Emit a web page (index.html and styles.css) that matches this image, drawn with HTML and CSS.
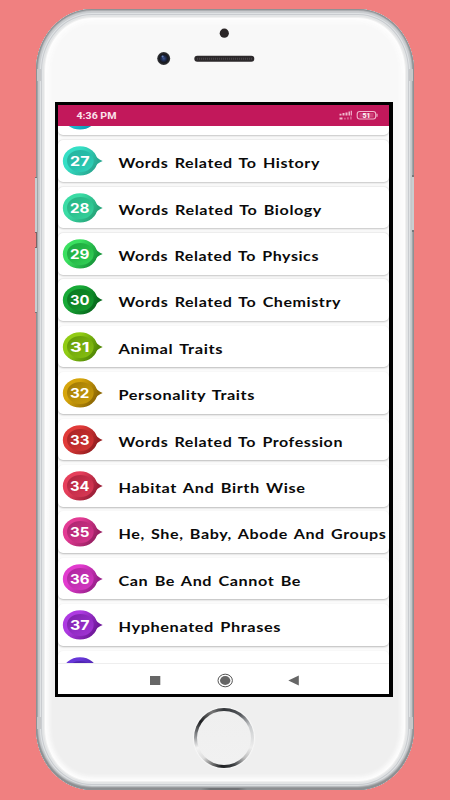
FILE: index.html
```html
<!DOCTYPE html>
<html>

<head>
    <meta charset="utf-8">
    <title>Vocabulary</title>
    <link rel="stylesheet" href="styles.css">
</head>

<body>
    <div class="phone">
        <span class="side left-up"></span>
        <span class="side left-gap"></span>
        <span class="side left-down"></span>
        <span class="side right-key"></span>
        <span class="antenna top-left"></span>
        <span class="antenna top-right"></span>
        <span class="antenna bottom-left"></span>
        <span class="antenna bottom-right"></span>
        <svg class="earpiece" viewBox="0 0 378 93">
            <defs>
                <radialGradient id="lens">
                    <stop offset="0" stop-color="#3c5490"/>
                    <stop offset=".4" stop-color="#1b2748"/>
                    <stop offset=".65" stop-color="#18191e"/>
                    <stop offset="1" stop-color="#35363a"/>
                </radialGradient>
            </defs>
            <circle cx="188.3" cy="24.2" r="4.6" fill="#2b2627"/>
            <circle cx="127.7" cy="49.5" r="6.5" fill="url(#lens)"/>
            <circle cx="126.6" cy="47.4" r="1" fill="#6782b8"/>
            <rect x="158.3" y="46.7" width="60" height="6" rx="3" fill="#2c292b"/>
            <path d="M161 49.7h55" stroke="#454245" stroke-width="2" stroke-dasharray="1 1"/>
        </svg>
        <div class="screen">
            <div class="status">
                <svg viewBox="0 0 331 21">
                    <text class="time" x="18.5" y="14" textLength="40" lengthAdjust="spacingAndGlyphs">4:36 PM</text>
                    <g fill="#f0b5cc">
                        <path d="M281.500 8.700h2v1.800h-2zM284.500 8h2v2.500h-2zM287.500 7.500h2v3h-2zM290.500 6.500h1.500v4h-1.500zM292.700 5.700h1.200v4.800h-1.200z"/>
                        <path d="M281.500 12.500h3v2h-3z"/>
                        <path d="M286 12.800h1.800v1.700h-1.800zM289 12.300h1.800v2.200h-1.800zM292 11.500h1.800v3h-1.800z" opacity=".45"/>
                    </g>
                    <rect x="299.200" y="6.500" width="18.500" height="7.500" rx="2.500" fill="none" stroke="#f0b5cc" stroke-width="1.100"/>
                    <path d="M301.500 8h14v4.500h-14z" fill="#e487ab" opacity=".4"/>
                    <path d="M319 8.700v3" stroke="#f0b5cc" stroke-width="1.200"/>
                    <text class="charge" x="304.500" y="12.700" textLength="8" lengthAdjust="spacingAndGlyphs">51</text>
                </svg>
            </div>
            <ul class="list" id="list"></ul>
            <div class="navbar">
                <svg viewBox="0 0 331 31">
                    <rect x="92" y="12" width="10.300" height="9" fill="#666"/>
                    <ellipse cx="167.200" cy="16.500" rx="7.200" ry="6.300" fill="none" stroke="#555" stroke-width="1"/>
                    <ellipse cx="167.200" cy="16.500" rx="5.200" ry="4.400" fill="#666"/>
                    <path d="M230.300 16.500l10.500-5v10z" fill="#666"/>
                </svg>
            </div>
        </div>
        <div class="chin">
            <div class="home"></div>
        </div>
        <span class="base-mark"></span>
    </div>

    <script src="script.js"></script>
</body>

</html>
```
FILE: styles.css
```css
body {
    margin: 0;
    height: 800px;
    overflow: hidden;
    background: #f08080;
    font-family: Lato, "Liberation Sans", sans-serif;
}

.phone {
    position: relative;
    box-sizing: border-box;
    width: 378px;
    height: 781px;
    margin: 9px 0 0 36px;
    border-radius: 56px / 62px;
    background: linear-gradient(#f8f8f8 50%, #efefef 85%);
    box-shadow:
        inset 0 0 0 1px #8e9194,
        inset 0 -2px 2px 1px #8b8e90,
        inset 0 0 1px 2px #a9acaf,
        inset 0 0 0 4px #cbced1,
        inset 0 0 0 5px #dfe2e4,
        inset 0 0 0 6px #c9ccd0,
        inset 0 0 0 8px #e3e5e6,
        inset 0 0 0 9px #f0f0f0,
        inset 0 0 4px 13px #fdfdfd;
}

.earpiece {
    display: block;
    width: 378px;
    height: 93px;
}

/* keys on the frame */
.side {
    position: absolute;
    width: 2px;
    box-sizing: border-box;
    background: #c9cdd0;
}

.left-up {
    left: -1px;
    top: 168px;
    height: 55px;
    border-top: 1px solid #777;
}

.left-gap {
    left: -1px;
    top: 223px;
    height: 16px;
    background: #f08080;
    border: solid #7c6465;
    border-width: 1px 1px 1px 0;
}

.left-down {
    left: -1px;
    top: 239px;
    height: 65px;
    border-bottom: 1px solid #777;
}

.right-key {
    right: 0;
    top: 166px;
    height: 57px;
    border-top: 2px solid #75797c;
    border-bottom: 2px solid #75797c;
}

.antenna {
    position: absolute;
    width: 4px;
    height: 12px;
    background: #c6c8ca;
}

.top-left {
    left: 1px;
    top: 60px;
}

.top-right {
    right: 1px;
    top: 60px;
}

.bottom-left {
    left: 1px;
    bottom: 61px;
}

.bottom-right {
    right: 1px;
    bottom: 61px;
}

.base-mark {
    position: absolute;
    left: 165px;
    bottom: 0;
    width: 46px;
    height: 2px;
    background: linear-gradient(90deg, transparent, #717376 20%, #717376 80%, transparent);
}

.screen {
    box-sizing: border-box;
    display: flex;
    flex-direction: column;
    width: 338px;
    height: 595px;
    margin-left: 19px;
    border: 3px solid #000;
    border-right-width: 4px;
    background: #fff;
    overflow: hidden;
}

.status {
    flex: none;
    height: 21px;
    background: #c2185b;
}

.status svg {
    display: block;
    width: 331px;
    height: 21px;
}

.navbar svg {
    display: block;
    width: 331px;
    height: 31px;
}

.time {
    font: 700 9.5px Roboto, sans-serif;
    fill: #fbe3ec;
}

.charge {
    font: 700 6.5px Roboto, sans-serif;
    fill: #fff;
}

.list {
    flex: 1;
    min-height: 0;
    margin: 0;
    padding: 0;
    list-style: none;
    overflow: hidden;
    background: #fbfbfb;
}

.list li {
    height: 41.6px;
    margin-bottom: 4.8px;
    border-radius: 5px;
    background: #fff;
    box-shadow: 0 1px 2px rgba(0, 0, 0, 0.26);
}

/* the list is scrolled part way through its first row */
.list li:first-child {
    margin-top: -32.2px;
}

/* shadows are softer near the top of the screen */
.list li:nth-child(-n+5) {
    box-shadow: 0 0.5px 2px rgba(0, 0, 0, 0.22);
}

.list svg {
    display: block;
    width: 331px;
    height: 41.6px;
}

.number {
    font: 700 13.3px Inter, sans-serif;
    fill: #fff;
}

.word {
    font: 700 14px Lato, sans-serif;
    letter-spacing: 0.5px;
    word-spacing: 1.6px;
    fill: #0a0a0a;
}

.navbar {
    box-sizing: border-box;
    height: 31px;
    flex: none;
    border-top: 1px solid #eee;
    background: #fff;
}

.chin {
    display: flex;
    justify-content: center;
    padding: 11px 2px 0 0;
}

.home {
    width: 54px;
    height: 54px;
    border: 3px solid transparent;
    border-radius: 50%;
    background:
        linear-gradient(#efefef, #f1f1f1) padding-box,
        conic-gradient(#33363a 0deg, #55585c 35deg, #c9cbcd 65deg, #eee 110deg, #bbb 135deg, #3c3f42 160deg, #1e2023 185deg, #777 205deg, #ddd 225deg, #f4f4f4 250deg, #8b8d90 275deg, #1c1e20 305deg, #777 335deg, #33363a 360deg) border-box;
    box-shadow: 0 0 1px 1px #f8f8f8;
}
```
FILE: script.js
```javascript
// number, title, title width, light rim, dark side, inner disc
var rows = [
    [26, "", 0, "#22c7dc", "#0c98b4", "#14a5c2"],
    [27, "Words Related To History", 201.5, "#35dfc5", "#28a992", "#22b8a5"],
    [28, "Words Related To Biology", 203.5, "#3bdca5", "#27a77b", "#29bd8a"],
    [29, "Words Related To Physics", 200.5, "#3be060", "#17983a", "#21b342"],
    [30, "Words Related To Chemistry", 222.5, "#18aa37", "#086b1d", "#0c8023"],
    [31, "Animal Traits", 104.5, "#91cc14", "#538a05", "#72a80b"],
    [32, "Personality Traits", 136.5, "#d6a50c", "#8f6903", "#b38a08"],
    [33, "Words Related To Profession", 224.5, "#e13b39", "#981f21", "#b92829"],
    [34, "Habitat And Birth Wise", 187, "#e63f5b", "#9d1f38", "#c22c49"],
    [35, "He, She, Baby, Abode And Groups", 268, "#e33b94", "#9b2064", "#bd2b7b"],
    [36, "Can Be And Cannot Be", 182.5, "#e23bcf", "#9c218d", "#bc2dad"],
    [37, "Hyphenated Phrases", 162.5, "#ae3ae2", "#70199b", "#8b29bd"],
    [38, "", 0, "#6736d8", "#421d99", "#5125b5"]
];

var list = document.getElementById("list");
rows.forEach(row => {
    var id = row[0];
    var li = document.createElement("li");
    // the first and last rows only show the edge of their badge
    var texts = row[1] ? `<text class="number" x="12" y="26.200" textLength="19.500" lengthAdjust="spacingAndGlyphs">${id}</text>
        <text class="word" x="60.500" y="28.200" textLength="${row[2]}" lengthAdjust="spacingAndGlyphs">${row[1]}</text>` : "";
    li.innerHTML = `<svg viewBox="0 0 331 41.6">
        <defs>
            <linearGradient id="rim${id}" x1="0" y1="0" x2="1" y2=".6">
                <stop offset=".4" stop-color="${row[3]}"/>
                <stop offset="1" stop-color="${row[4]}"/>
            </linearGradient>
            <linearGradient id="disc${id}" x1="0" y1="0" x2="1" y2="1">
                <stop offset="0" stop-color="${row[4]}"/>
                <stop offset=".45" stop-color="${row[5]}"/>
                <stop offset="1" stop-color="${row[3]}"/>
            </linearGradient>
        </defs>
        <path d="M36 13.500Q39 19 44.700 20.900Q39 22.800 36 28.300z" fill="${row[4]}"/>
        <ellipse cx="22" cy="20.900" rx="17.200" ry="14.700" fill="url(#rim${id})"/>
        <ellipse cx="22.300" cy="20.900" rx="13.300" ry="11" fill="url(#disc${id})" opacity=".85"/>
        ${texts}
    </svg>`;
    list.appendChild(li);
});
```
